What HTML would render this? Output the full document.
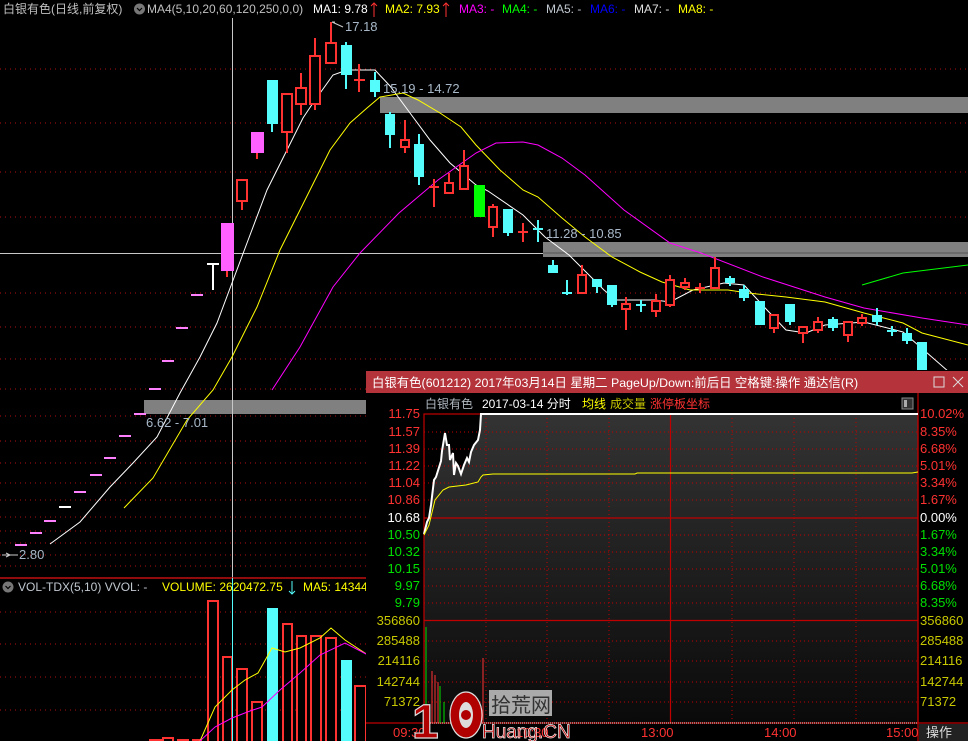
<!DOCTYPE html>
<html><head><meta charset="utf-8"><style>
html,body{margin:0;padding:0;background:#000;width:968px;height:741px;overflow:hidden}
svg{display:block;font-size:12px}
text{font-family:"Liberation Sans","Noto Sans CJK SC",sans-serif}
</style></head><body>
<svg width="968" height="741" viewBox="0 0 968 741" xmlns="http://www.w3.org/2000/svg" font-size="12">
<defs>
<linearGradient id="bg" x1="0" y1="0" x2="0" y2="1"><stop offset="0" stop-color="#333"/><stop offset="1" stop-color="#0a0a0a"/></linearGradient>
</defs>
<rect width="968" height="741" fill="#000"/>
<g stroke="#b01010" stroke-dasharray="1,4" stroke-width="1">
<path d="M0 69H968M0 123H968M0 172H968M0 217H968M0 293H968M0 327H968M0 359H968M0 389H968M0 416H366M0 441H366M0 463H366M0 483H366M0 500H366M0 517H366M0 531H366M0 543H366M0 555H366M0 566H366"/>
<path d="M0 612H366M0 644H366M0 677H366M0 710H366"/>
</g>
<rect x="380" y="97" width="588" height="16" fill="#808080"/>
<rect x="543" y="242" width="425" height="15" fill="#808080"/>
<line x1="543" y1="253" x2="968" y2="253" stroke="#555"/>
<rect x="144" y="400" width="223" height="14" fill="#808080"/>
<line x1="232.5" y1="18" x2="232.5" y2="741" stroke="#c8c8c8"/>
<line x1="0" y1="253.5" x2="543" y2="253.5" stroke="#c8c8c8"/>
<polyline fill="none" stroke="#fff" stroke-width="1" points="50,544 80,522 110,487 133,463 157,437 180,393 200,357 217,323 232,283 247,243 267,190 287,150 303,118 313,103 333,75 347,70 375,70 390,86 410,113 430,140 450,163 476,185 488,191 523,215 545,237 569,255 604,290 616,300 655,300 670,302 693,290 724,283 744,285 767,310 786,330 806,333 825,325 864,322 903,332 918,345 949,372 968,380"/>
<polyline fill="none" stroke="#ffff00" points="124,508 153,478 187,420 213,390 232,357 257,307 280,250 300,210 330,150 350,123 367,108 380,97 403,93 418,100 440,113 461,127 476,145 500,170 523,190 538,197 562,218 585,237 612,257 640,272 662,282 690,290 728,290 748,293 786,297 825,302 864,313 903,323 922,333 968,345"/>
<polyline fill="none" stroke="#ff00ff" points="272,390 300,347 333,287 360,253 399,213 438,180 476,153 496,143 523,142 538,145 562,158 585,175 624,210 670,243 701,253 763,277 825,297 864,308 922,318 968,325"/>
<polyline fill="none" stroke="#00ff00" points="862,285 903,273 968,265"/>
<g stroke-width="2">
<g stroke="#ff80ff">
<path d="M15 545H27M30 533H42M44 521H56M74 492H86M90 475H102M104 458H116M119 436H131M134 414H146M149 389H161M162 361H174M176 328H188M191 295H203"/>
</g>
<path d="M59 507H71" stroke="#fff"/>
<path d="M207 264H219M213 264V290" stroke="#fff"/>
</g>
<g stroke="#ff3232" stroke-width="2" fill="#000">
<path d="M242 179V210M287 94V153M301 73V115M315 38V110M331 22V63M405 120V153M449 173V193M464 150V189M493 204V237M582 265V293M626 297V330M656 294V317M670 275V307M685 278V290M715 257V288M774 315V333M803 327V343M818 317V333M848 322V342M862 314V326"/>
<path d="M359 64V92M354 80H365M434 179V207M429 187H439M523 223V242M518 232H528M700 283V293M695 288H705"/>
<rect x="237" y="180" width="10" height="21"/><rect x="282" y="94" width="10" height="38"/><rect x="296" y="88" width="10" height="16"/>
<rect x="310" y="56" width="10" height="48"/><rect x="326" y="43" width="10" height="20"/>
<rect x="401" y="140" width="8" height="7"/><rect x="445" y="183" width="8" height="10"/><rect x="460" y="166" width="8" height="23"/>
<rect x="489" y="207" width="8" height="20"/><rect x="578" y="275" width="8" height="18"/><rect x="622" y="304" width="8" height="5"/>
<rect x="652" y="301" width="8" height="10"/><rect x="666" y="280" width="8" height="25"/><rect x="681" y="283" width="8" height="4"/>
<rect x="711" y="268" width="8" height="20"/><rect x="770" y="315" width="8" height="13"/><rect x="799" y="327" width="8" height="6"/>
<rect x="814" y="322" width="8" height="8"/><rect x="844" y="322" width="8" height="13"/><rect x="858" y="318" width="8" height="5"/>
</g>
<g fill="#54fcfc" stroke="#54fcfc" stroke-width="2">
<path d="M272 124V132M346 42V89M375 72V97M390 112V148M419 134V185M508 209V236M553 260V273M597 279V293M612 285V307M730 276V286M744 285V301M790 304V325M833 317V331M877 308V325M907 328V344M538 220V242M533 229H543M567 280V295M562 293H572M641 300V312M636 305H646M892 326V336M887 331H897"/>
<g stroke="none">
<rect x="267" y="80" width="11" height="44"/><rect x="341" y="45" width="11" height="30"/><rect x="370" y="80" width="10" height="12"/>
<rect x="385" y="114" width="10" height="21"/><rect x="414" y="144" width="10" height="33"/><rect x="503" y="209" width="10" height="24"/>
<rect x="548" y="265" width="10" height="8"/><rect x="592" y="279" width="10" height="8"/><rect x="607" y="285" width="10" height="20"/>
<rect x="725" y="278" width="10" height="5"/><rect x="739" y="289" width="10" height="9"/><rect x="755" y="301" width="10" height="24"/>
<rect x="785" y="304" width="10" height="18"/><rect x="828" y="319" width="10" height="9"/><rect x="872" y="315" width="10" height="7"/>
<rect x="902" y="333" width="10" height="8"/><rect x="917" y="342" width="10" height="30"/>
</g></g>
<rect x="474" y="185" width="11" height="32" fill="#00ff00"/>
<g stroke="#ff3232" stroke-width="2"><path d="M227 271V277M257 153V159"/></g>
<rect x="221" y="223" width="13" height="48" fill="#ff60ff"/>
<rect x="251" y="132" width="13" height="21" fill="#ff60ff"/>
<g fill="#a8b8c8" font-size="13">
<text x="345" y="31">17.18</text>
<text x="383" y="93">15.19 - 14.72</text>
<text x="546" y="238">11.28 - 10.85</text>
<text x="146" y="427">6.62 - 7.01</text>
<text x="19" y="559">2.80</text>
</g>
<path d="M332 22L343 27M332 22l3 0M2 555H18M6 553L10 555L6 557" stroke="#ccc" fill="none"/>
<g font-size="12">
<text x="3" y="13" fill="#c0c0c0">白银有色(日线,前复权)</text>
<circle cx="139.5" cy="9" r="5.5" fill="#777"/><path d="M137 8l2.5 2.5 2.5-2.5" stroke="#000" fill="none" stroke-width="1.2"/>
<text x="147" y="13" fill="#c0c0c0">MA4(5,10,20,60,120,250,0,0)</text>
<text x="313" y="13" fill="#fff">MA1: 9.78</text>
<path d="M374 3V17M371 6l3-3 3 3" stroke="#ff3232" fill="none"/>
<text x="385" y="13" fill="#ffff00">MA2: 7.93</text>
<path d="M446 3V17M443 6l3-3 3 3" stroke="#ff3232" fill="none"/>
<text x="459" y="13" fill="#ff00ff">MA3: -</text>
<text x="502" y="13" fill="#00ff00">MA4: -</text>
<text x="546" y="13" fill="#c0c8d0">MA5: -</text>
<text x="590" y="13" fill="#0000ff">MA6: -</text>
<text x="634" y="13" fill="#e0e0e0">MA7: -</text>
<text x="678" y="13" fill="#ffff00">MA8: -</text>
</g>
<line x1="0" y1="578" x2="368" y2="578" stroke="#c01010" stroke-width="1.5"/>
<circle cx="8" cy="587" r="5.5" fill="#777"/><path d="M5.5 586l2.5 2.5 2.5-2.5" stroke="#000" fill="none" stroke-width="1.2"/>
<g font-size="12">
<text x="18" y="591" fill="#c0c8d0">VOL-TDX(5,10)  VVOL: -</text>
<text x="162" y="591" fill="#ffff00">VOLUME: 2620472.75</text>
<text x="303" y="591" fill="#ffff00">MA5: 14344</text>
</g>
<path d="M292 581V594M289 591l3 3 3-3" stroke="#54fcfc" fill="none"/>
<g fill="#000" stroke="#ff3232" stroke-width="2">
<rect x="208" y="601" width="10" height="145"/><rect x="223" y="657" width="9" height="90"/><rect x="237" y="669" width="10" height="80"/>
<rect x="252" y="702" width="10" height="50"/><rect x="283" y="624" width="9" height="130"/><rect x="297" y="636" width="9" height="120"/>
<rect x="311" y="636" width="10" height="120"/><rect x="326" y="638" width="10" height="120"/><rect x="355" y="686" width="11" height="70"/>
<rect x="150" y="740" width="16" height="5"/><rect x="163" y="738" width="10" height="8"/><rect x="178" y="740" width="10" height="5"/><rect x="193" y="740" width="8" height="5"/>
</g>
<rect x="267" y="608" width="11" height="133" fill="#54fcfc"/>
<rect x="341" y="660" width="11" height="81" fill="#54fcfc"/>
<line x1="232.5" y1="578" x2="232.5" y2="741" stroke="#54fcfc"/>
<polyline fill="none" stroke="#ffff00" points="200,741 215,707 232,690 245,680 258,673 272,648 285,652 300,648 320,638 331,628 345,640 368,655"/>
<polyline fill="none" stroke="#ff00ff" points="200,741 215,727 232,718 250,711 262,707 280,690 300,673 320,655 345,643 368,655"/>
<!-- popup -->
<rect x="366" y="370" width="602" height="371" fill="#000"/>
<rect x="366" y="371" width="602" height="22" fill="#b5333a"/>
<text x="372" y="387" fill="#fff" font-size="12.4">白银有色(601212) 2017年03月14日 星期二 PageUp/Down:前后日 空格键:操作 通达信(R)</text>
<rect x="934" y="377" width="10" height="10" fill="none" stroke="#ddd"/>
<path d="M953 377l10 10M963 377l-10 10" stroke="#ddd"/>
<g font-size="12">
<text x="425" y="408" fill="#b0b8c0">白银有色</text>
<text x="482" y="408" fill="#fff">2017-03-14 分时</text>
<text x="582" y="408" fill="#ffff00">均线</text>
<text x="610" y="408" fill="#c8c800">成交量</text>
<text x="650" y="408" fill="#ff3232">涨停板坐标</text>
</g>
<rect x="902" y="398" width="11" height="11" fill="#333" stroke="#888"/><rect x="904" y="400" width="3" height="7" fill="#aaa"/>
<rect x="424" y="414" width="494" height="309" fill="url(#bg)"/>
<polygon points="424,414 424,534 427,522 429,518 431,505 434,480 436,477 441,461 442,451 445,433 447,445 449,445 450,460 453,453 454,475 456,463 458,466 461,474 464,465 467,458 469,462 471,452 474,445 478,440 480,430 481,414" fill="#000"/>
<g stroke="#c00000" stroke-dasharray="1,3">
<path d="M424 432H918M424 449H918M424 466H918M424 483H918M424 500H918M424 535H918M424 552H918M424 569H918M424 586H918M424 603H918M424 641H918M424 661H918M424 682H918M424 702H918"/>
<path d="M486 414V723M547 414V723M609 414V723M732 414V723M794 414V723M856 414V723"/>
</g>
<g stroke="#c00000" stroke-width="1.2" fill="none">
<rect x="424" y="414" width="494" height="309"/>
<path d="M424 518H918M424 620.5H918M670.5 414V723M366 723H968M918 393V741"/>
</g>
<path d="M424 723H918" stroke="#ddd" stroke-dasharray="1,1"/>
<polyline fill="none" stroke="#fff" stroke-width="2" points="424,534 427,522 429,518 431,505 434,480 436,477 441,461 442,451 445,433 447,445 449,445 450,460 453,453 454,475 456,463 458,466 461,474 464,465 467,458 469,462 471,452 474,445 478,440 480,430 481,414 918,414"/>
<polyline fill="none" stroke="#ffff00" points="424,535 429,525 435,500 443,490 449,487 466,485 478,482 481,477 483,475 493,474 635,474 637,473 912,473 918,472"/>
<g stroke-width="1">
<path d="M426 627V723M440 686V723M444 702V723M462 713V723" stroke="#00e000"/>
<path d="M432 671V723M435 675V723M438 682V723M483 658V723M452 706V723" stroke="#ff3232"/>
</g>
<g font-size="13" text-anchor="end">
<g fill="#ff3232"><text x="420" y="418">11.75</text><text x="420" y="436">11.57</text><text x="420" y="453">11.39</text><text x="420" y="470">11.22</text><text x="420" y="487">11.04</text><text x="420" y="504">10.86</text></g>
<text x="420" y="522" fill="#fff">10.68</text>
<g fill="#00e000"><text x="420" y="539">10.50</text><text x="420" y="556">10.32</text><text x="420" y="573">10.15</text><text x="420" y="590">9.97</text><text x="420" y="607">9.79</text></g>
<g fill="#c8c800"><text x="420" y="625">356860</text><text x="420" y="645">285488</text><text x="420" y="665">214116</text><text x="420" y="686">142744</text><text x="420" y="706">71372</text></g>
</g>
<g font-size="13">
<g fill="#ff3232"><text x="920" y="418">10.02%</text><text x="920" y="436">8.35%</text><text x="920" y="453">6.68%</text><text x="920" y="470">5.01%</text><text x="920" y="487">3.34%</text><text x="920" y="504">1.67%</text></g>
<text x="920" y="522" fill="#fff">0.00%</text>
<g fill="#00e000"><text x="920" y="539">1.67%</text><text x="920" y="556">3.34%</text><text x="920" y="573">5.01%</text><text x="920" y="590">6.68%</text><text x="920" y="607">8.35%</text></g>
<g fill="#c8c800"><text x="920" y="625">356860</text><text x="920" y="645">285488</text><text x="920" y="665">214116</text><text x="920" y="686">142744</text><text x="920" y="706">71372</text></g>
<g fill="#ff3232"><text x="393" y="737">09:30</text><text x="516" y="737">10:30</text><text x="641" y="737">13:00</text><text x="764" y="737">14:00</text><text x="886" y="737">15:00</text></g>
<rect x="919" y="724" width="49" height="17" fill="#222"/>
<text x="926" y="737" fill="#ddd">操作</text>
</g>
<g>
<rect x="489" y="690" width="63" height="26" fill="#bbb" opacity="0.9"/>
<text x="491" y="712" fill="#333" font-size="20">拾荒网</text>
<text x="412" y="738" fill="#b00000" stroke="#ddd" stroke-width="1.2" font-size="48" font-weight="bold">1</text>
<ellipse cx="466" cy="715" rx="16" ry="23" fill="#b00000" stroke="#ddd" stroke-width="1.2"/>
<ellipse cx="466" cy="715" rx="7" ry="13" fill="#ddd"/>
<circle cx="466" cy="715" r="5" fill="#b00000"/>
<text x="482" y="738" fill="#c00000" stroke="#eee" stroke-width="0.7" font-size="19">Huang.CN</text>
</g>
</svg>
</body></html>
